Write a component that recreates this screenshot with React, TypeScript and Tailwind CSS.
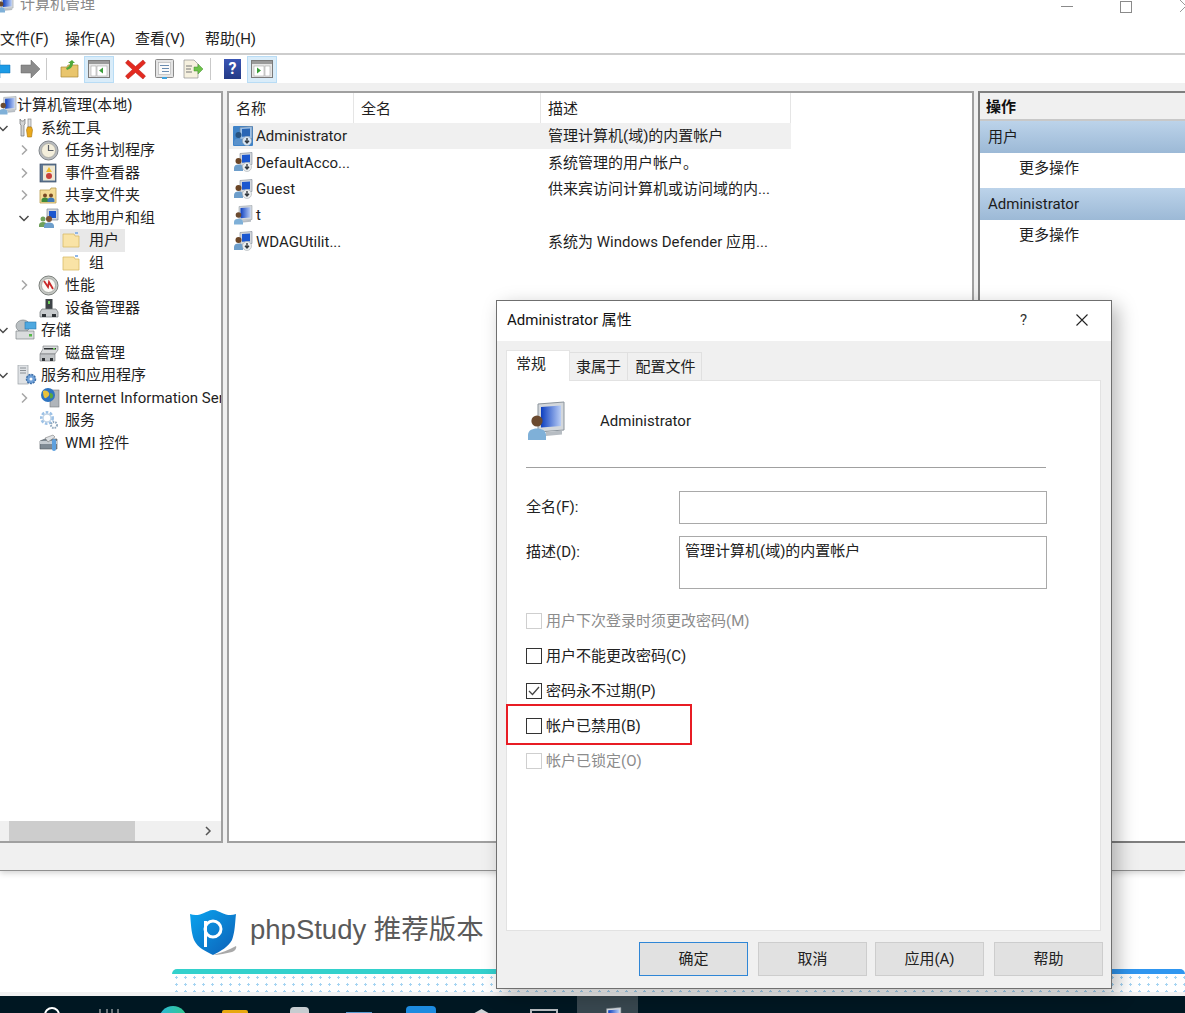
import React from "react";

const F = "[font-family:'Roboto','Noto_Sans_CJK_SC',sans-serif]";

function Monitor({ s = 18 }: { s?: number }) {
  return (
    <svg width={s} height={s} viewBox="0 0 20 20" className="shrink-0">
      <defs>
        <linearGradient id="scr" x1="0" y1="0" x2="1" y2="0">
          <stop offset="0" stopColor="#0d3fc0" />
          <stop offset="1" stopColor="#b9cdf5" />
        </linearGradient>
      </defs>
      <path d="M6 1.500L19 .5v14l-13 1z" fill="#d4d8dc" stroke="#8b949c" strokeWidth=".5" />
      <path d="M7.500 3L17.500 2.200v10.300L7.500 13.300z" fill="url(#scr)" />
      <path d="M10 15.500l8-.7v2l-8 .7z" fill="#b7bdc3" />
      <circle cx="5.500" cy="10" r="2.800" fill="#6b4a2f" />
      <path d="M1 19.500V17c0-2.300 2-3.300 4.500-3.300S10 14.700 10 17v2.500z" fill="#7fb0d8" />
    </svg>
  );
}

function UserDown({ selected }: { selected?: boolean }) {
  return (
    <svg width="20" height="20" viewBox="0 0 20 20" className="shrink-0">
      {selected ? <rect x="0" y="0" width="20" height="20" fill="#3f83c8" rx="1" /> : null}
      <path d="M7 1.500l12-1v12l-12 1z" fill={selected ? "#9cc2ea" : "#d4d8dd"} stroke="#7d8894" strokeWidth=".6" />
      <path d="M9 3l8-.6v7.800l-8 .6z" fill={selected ? "#2a66b5" : "#1b57cf"} />
      <circle cx="5.500" cy="9" r="3" fill={selected ? "#27527f" : "#6b4526"} />
      <path d="M1 19v-3c0-2.500 2-3.500 4.500-3.500s4.500 1 4.500 3.500v3z" fill={selected ? "#5a92cc" : "#6d9ecb"} />
      <circle cx="14" cy="15" r="4.500" fill={selected ? "#d7e6f6" : "#eceeef"} stroke="#9aa2a8" strokeWidth=".5" />
      <path d="M14 12v4.500M12 14.800l2 2.200 2-2.200" stroke="#33393f" strokeWidth="1.400" fill="none" />
    </svg>
  );
}

function Folder() {
  return (
    <svg width="18" height="18" viewBox="0 0 18 18" className="shrink-0">
      <path d="M1 16V3h11l1 2h4v11z" fill="#f9e3a6" stroke="#d9bb68" strokeWidth=".8" />
      <rect x="13" y="1" width="3" height="2" fill="#8fb6e6" />
    </svg>
  );
}

function TreeIcon({ name }: { name: string }) {
  switch (name) {
    case "computer":
      return <Monitor s={19} />;
    case "tools":
      return (
        <svg width="18" height="20" viewBox="0 0 18 20" className="shrink-0">
          <path d="M3 1v5l1 1v11h3V7l1-1V1L6.500 3h-2z" fill="#d3d5d6" stroke="#6e7173" strokeWidth=".7" />
          <rect x="11" y="1" width="3" height="8" fill="#dfe1e3" stroke="#777" strokeWidth=".6" />
          <path d="M10.500 9h4l1 3-1 7h-4l-1-7z" fill="#eaa91c" stroke="#a8740d" strokeWidth=".6" />
        </svg>
      );
    case "clock":
      return (
        <svg width="21" height="21" viewBox="0 0 21 21" className="-ml-[1px] shrink-0">
          <circle cx="10.500" cy="10.500" r="9.500" fill="#b9bcbf" stroke="#80858a" />
          <circle cx="10.500" cy="10.500" r="7" fill="#f4efdc" stroke="#9a9a92" strokeWidth=".6" />
          <path d="M10.500 5v5.500h5" stroke="#5a5f66" strokeWidth="1.200" fill="none" />
        </svg>
      );
    case "log":
      return (
        <svg width="18" height="20" viewBox="0 0 18 20" className="shrink-0">
          <rect x="1" y="1" width="16" height="18" fill="#5f7896" stroke="#3c4e66" strokeWidth=".7" />
          <rect x="4" y="2.500" width="12" height="15" fill="#efe8d2" />
          <path d="M10 4l3 5H7z" fill="#f0bd2c" />
          <circle cx="10" cy="13" r="3" fill="#c8413c" />
        </svg>
      );
    case "share":
      return (
        <svg width="18" height="18" viewBox="0 0 18 18" className="shrink-0">
          <path d="M1 17V4h10l1-2h5v15z" fill="#f4dc96" stroke="#b99c50" strokeWidth=".8" />
          <circle cx="6" cy="9.500" r="2" fill="#7a4a24" />
          <path d="M2.500 16v-2c0-1.500 1.500-2.500 3.500-2.500s3.500 1 3.500 2.500v2z" fill="#3f8a3a" />
          <circle cx="12" cy="9.500" r="2" fill="#7a4a24" />
          <path d="M8.500 16v-2c0-1.500 1.500-2.500 3.500-2.500s3.500 1 3.500 2.500v2z" fill="#3d78b8" />
        </svg>
      );
    case "users":
      return (
        <svg width="20" height="20" viewBox="0 0 20 20" className="shrink-0">
          <path d="M8 1h11v11H8z" fill="#cfd4da" stroke="#7d8894" strokeWidth=".7" />
          <path d="M10 3h7v7h-7z" fill="#1b57cf" />
          <circle cx="4" cy="11" r="2.500" fill="#6fa05a" />
          <path d="M0 19v-2c0-2 2-3 4-3s4 1 4 3v2z" fill="#6fa05a" />
          <circle cx="10" cy="11" r="3" fill="#7a5233" />
          <path d="M5 20v-2c0-2.500 2.500-3.500 5-3.500s5 1 5 3.500v2z" fill="#6d9ecb" />
        </svg>
      );
    case "folder":
      return <Folder />;
    case "perf":
      return (
        <svg width="21" height="21" viewBox="0 0 21 21" className="-ml-[1px] shrink-0">
          <circle cx="10.500" cy="10.500" r="9.500" fill="#c5c8c4" stroke="#7c807c" />
          <circle cx="10.500" cy="10.500" r="7" fill="#fbfbf6" stroke="#8a8c88" strokeWidth=".6" />
          <path d="M6 6l4 6 1-5 4 7" stroke="#c92a2a" strokeWidth="1.800" fill="none" />
        </svg>
      );
    case "device":
      return (
        <svg width="20" height="20" viewBox="0 0 20 20" className="shrink-0">
          <rect x="6.500" y="1" width="7" height="10" fill="#3e4347" />
          <rect x="9" y="3" width="2" height="3" fill="#6fcf5a" />
          <path d="M1 19v-5l2-3h14l2 3v5z" fill="#c9ccce" stroke="#6e7276" strokeWidth=".7" />
          <rect x="3" y="16" width="4" height="3" fill="#2f3336" />
          <rect x="13" y="16" width="4" height="3" fill="#2f3336" />
        </svg>
      );
    case "storage":
      return (
        <svg width="22" height="22" viewBox="0 0 22 22" className="-ml-[2px] shrink-0">
          <ellipse cx="8" cy="7" rx="7" ry="6" fill="#b9bfc2" stroke="#7e8487" strokeWidth=".7" />
          <rect x="10" y="3" width="11" height="7" fill="#4da8e0" stroke="#2a77ad" strokeWidth=".6" />
          <path d="M1 12h18v8H1z" fill="#d9dcdd" stroke="#7e8487" strokeWidth=".7" />
          <rect x="14" y="15" width="3" height="2.500" fill="#55b848" />
        </svg>
      );
    case "disk":
      return (
        <svg width="20" height="18" viewBox="0 0 20 18" className="shrink-0">
          <path d="M4 2h15v4l-3 4H1l3-5z" fill="#d9dbdc" stroke="#6e7276" strokeWidth=".6" />
          <rect x="5" y="4" width="12" height="1.500" fill="#2c3033" />
          <rect x="14" y="4" width="2" height="1.500" fill="#6fcf5a" />
          <path d="M1 10h15v7H1z" fill="#c1c4c6" stroke="#6e7276" strokeWidth=".6" />
          <rect x="3" y="14" width="3" height="3" fill="#2f3336" />
          <rect x="11" y="14" width="3" height="3" fill="#2f3336" />
        </svg>
      );
    case "services":
      return (
        <svg width="20" height="20" viewBox="0 0 20 20" className="shrink-0">
          <rect x="1" y="0" width="10" height="19" fill="#dfe2e5" stroke="#9ba1a6" strokeWidth=".7" />
          <path d="M3 3h6M3 5.500h6M3 8h6" stroke="#8a9096" />
          <circle cx="14" cy="14" r="4.500" fill="#6fa0d8" stroke="#3f70a8" strokeDasharray="2 1" strokeWidth="1.500" />
          <circle cx="14" cy="14" r="1.500" fill="#fff" />
        </svg>
      );
    case "iis":
      return (
        <svg width="21" height="21" viewBox="0 0 21 21" className="shrink-0">
          <rect x="11" y="3" width="9" height="17" fill="#b0b5ba" stroke="#75797d" strokeWidth=".6" />
          <circle cx="9" cy="8" r="7" fill="#2f74c0" />
          <path d="M4 4c3-1 5 0 6 2s-1 4-3 5-3-3-3-7z" fill="#e9c13c" />
          <path d="M11 6c2 0 3 1 3 3s-2 3-3 2z" fill="#5aa83c" />
        </svg>
      );
    case "gear":
      return (
        <svg width="20" height="20" viewBox="0 0 20 20" className="shrink-0">
          <circle cx="8" cy="8" r="5.500" fill="none" stroke="#9cc1e6" strokeWidth="3" strokeDasharray="2.500 1.500" />
          <circle cx="8" cy="8" r="4" fill="none" stroke="#c3d5e6" strokeWidth="1.500" />
          <circle cx="15" cy="15" r="3" fill="none" stroke="#8fa7bd" strokeWidth="2" strokeDasharray="1.500 1" />
        </svg>
      );
    default:
      return (
        <svg width="20" height="18" viewBox="0 0 20 18" className="shrink-0">
          <path d="M1 7l5-2h12v10H1z" fill="#7f8a94" stroke="#4e565d" strokeWidth=".6" />
          <path d="M1 7h17v3H1z" fill="#c5cbd1" />
          <path d="M6 4l8-3 2 2-7 5z" fill="#dfe2e5" stroke="#666" strokeWidth=".5" />
          <rect x="13" y="5" width="4" height="12" rx="2" fill="#5ea0de" />
        </svg>
      );
  }
}

function Chevron({ open }: { open?: boolean }) {
  return open ? (
    <svg width="12" height="12" viewBox="0 0 12 12" className="shrink-0">
      <path d="M1.500 4l4.500 4.500L10.500 4" fill="none" stroke="#4a4a4a" strokeWidth="1.500" />
    </svg>
  ) : (
    <svg width="12" height="12" viewBox="0 0 12 12" className="shrink-0">
      <path d="M4 1.500L8.500 6 4 10.500" fill="none" stroke="#a6a6a6" strokeWidth="1.500" />
    </svg>
  );
}

type TreeItem = { level: number; icon: string; text: string; c?: "open" | "closed"; sel?: boolean };
const TREE: TreeItem[] = [
  { level: 0, icon: "computer", text: "计算机管理(本地)" },
  { level: 1, icon: "tools", text: "系统工具", c: "open" },
  { level: 2, icon: "clock", text: "任务计划程序", c: "closed" },
  { level: 2, icon: "log", text: "事件查看器", c: "closed" },
  { level: 2, icon: "share", text: "共享文件夹", c: "closed" },
  { level: 2, icon: "users", text: "本地用户和组", c: "open" },
  { level: 3, icon: "folder", text: "用户", sel: true },
  { level: 3, icon: "folder", text: "组" },
  { level: 2, icon: "perf", text: "性能", c: "closed" },
  { level: 2, icon: "device", text: "设备管理器" },
  { level: 1, icon: "storage", text: "存储", c: "open" },
  { level: 2, icon: "disk", text: "磁盘管理" },
  { level: 1, icon: "services", text: "服务和应用程序", c: "open" },
  { level: 2, icon: "iis", text: "Internet Information Services (IIS)管理器", c: "closed" },
  { level: 2, icon: "gear", text: "服务" },
  { level: 2, icon: "wmi", text: "WMI 控件" },
];

const CHEV = ["w-0 -ml-[2px]", "w-[20px] -ml-[3px]", "w-[39px] pl-[18px]", "w-[62px]"];
const ICONBOX = ["w-[19px]", "w-[24px]", "w-[26px]", "w-[27px]"];

function TreeRow({ item }: { item: TreeItem }) {
  return (
    <div className="flex h-[22.5px] items-center whitespace-nowrap">
      <div className={`${CHEV[item.level]} flex shrink-0 justify-start`}>
        {item.c ? <Chevron open={item.c === "open"} /> : null}
      </div>
      <div className={`flex h-full items-center ${item.sel ? "-ml-[2px] bg-[#e8e8e8] pl-[2px] pr-[6px]" : ""}`}>
        <div className={`${ICONBOX[item.level]} flex shrink-0`}>
          <TreeIcon name={item.icon} />
        </div>
        <span>{item.text}</span>
      </div>
    </div>
  );
}

function ToolBtn({ active, children }: { active?: boolean; children: React.ReactNode }) {
  return (
    <div
      className={`flex h-[27px] shrink-0 items-center justify-center ${
        active ? "w-[30px] border border-[#b8dcf5] bg-[#d9ecf9]" : "w-[29px]"
      }`}
    >
      {children}
    </div>
  );
}

function Toolbar() {
  return (
    <div className="flex h-[28px] shrink-0 items-center bg-white">
      <div className="flex w-[11px] shrink-0 items-center justify-end overflow-hidden">
        <svg width="21" height="20" viewBox="0 0 21 20" className="shrink-0">
          <path d="M1 10l9-9v5h10v8H10v5z" fill="#1c9be6" stroke="#0f6db0" strokeWidth=".5" />
        </svg>
      </div>
      <div className="ml-[9px] flex w-[21px] shrink-0">
        <svg width="21" height="20" viewBox="0 0 21 20">
          <path d="M20 10l-9-9v5H1v8h10v5z" fill="#8b8b8b" stroke="#666" strokeWidth=".5" />
        </svg>
      </div>
      <div className="ml-[5px] h-[22px] w-px bg-[#c9c9c9]" />
      <div className="ml-[8px]">
        <ToolBtn>
          <svg width="20" height="20" viewBox="0 0 20 20">
            <path d="M1 18V8h6l1-2h10v12z" fill="#e9c56c" stroke="#a98834" strokeWidth=".7" />
            <path d="M6 9c2-1 4-2 4-5l-2 0 4-3 3 3h-2c0 4-3 6-6 7z" fill="#4fa83a" />
          </svg>
        </ToolBtn>
      </div>
      <ToolBtn active>
        <svg width="22" height="18" viewBox="0 0 22 18">
          <rect x=".5" y=".5" width="21" height="17" fill="#e6e6e6" stroke="#7a7a7a" />
          <rect x="1" y="1" width="20" height="3" fill="#9a9a9a" />
          <rect x="3" y="6" width="5" height="10" fill="#fff" stroke="#9a9a9a" strokeWidth=".5" />
          <rect x="9" y="6" width="10" height="10" fill="#fff" stroke="#9a9a9a" strokeWidth=".5" />
          <path d="M15 7.500v6L11 10.500z" fill="#3a9e3a" />
        </svg>
      </ToolBtn>
      <div className="ml-[7px]">
        <ToolBtn>
          <svg width="21" height="21" viewBox="0 0 21 21">
            <path d="M3 1l7.500 6.500L18 1l2.500 3-7 6.500 7 6.500-2.500 3-7.500-6.500L3 20l-2.500-3 7-6.500-7-6.500z" fill="#e32a20" stroke="#b31b13" strokeWidth=".5" />
          </svg>
        </ToolBtn>
      </div>
      <ToolBtn>
        <svg width="19" height="20" viewBox="0 0 19 20">
          <rect x=".5" y=".5" width="18" height="18" rx="1" fill="#e4e4e4" stroke="#8a8a8a" />
          <rect x="3.500" y="3.500" width="12" height="12" fill="#fafafa" stroke="#b0b0b0" strokeWidth=".6" />
          <path d="M5 6.500h9M7 9.500h7M7 12.500h7" stroke="#6a8cb0" />
          <rect x="7" y="18" width="5" height="2" fill="#3ea3e0" />
        </svg>
      </ToolBtn>
      <ToolBtn>
        <svg width="21" height="20" viewBox="0 0 21 20">
          <path d="M1 1h10l4 4v14H1z" fill="#f6f1df" stroke="#8f8f8f" strokeWidth=".7" />
          <path d="M3 7h6M3 10h5M3 13h6" stroke="#777" />
          <path d="M11 8h4V5l5 5-5 5v-3h-4z" fill="#6cc24a" stroke="#43912a" strokeWidth=".5" />
        </svg>
      </ToolBtn>
      <div className="ml-[2px] h-[22px] w-px bg-[#c9c9c9]" />
      <div className="ml-[7px]">
        <ToolBtn>
          <div className="flex h-[20px] w-[17px] items-center justify-center bg-gradient-to-b from-[#3a55b5] to-[#233a86] text-[16px] font-bold leading-none text-white">
            ?
          </div>
        </ToolBtn>
      </div>
      <ToolBtn active>
        <svg width="22" height="18" viewBox="0 0 22 18">
          <rect x=".5" y=".5" width="21" height="17" fill="#e6e6e6" stroke="#7a7a7a" />
          <rect x="1" y="1" width="20" height="3" fill="#9a9a9a" />
          <rect x="3" y="6" width="10" height="10" fill="#fff" stroke="#9a9a9a" strokeWidth=".5" />
          <rect x="14" y="6" width="5" height="10" fill="#fff" stroke="#9a9a9a" strokeWidth=".5" />
          <path d="M6 7.500v6l4-3z" fill="#3a9e3a" />
        </svg>
      </ToolBtn>
    </div>
  );
}

const USERS = [
  { n: "Administrator", d: "管理计算机(域)的内置帐户", sel: true, plain: false },
  { n: "DefaultAcco...", d: "系统管理的用户帐户。", sel: false, plain: false },
  { n: "Guest", d: "供来宾访问计算机或访问域的内...", sel: false, plain: false },
  { n: "t", d: "", sel: false, plain: true },
  { n: "WDAGUtilit...", d: "系统为 Windows Defender 应用...", sel: false, plain: false },
];

function Check({ checked, disabled }: { checked?: boolean; disabled?: boolean }) {
  return (
    <div
      className={`flex h-[16px] w-[16px] shrink-0 items-center justify-center border ${
        disabled ? "border-[#cfcfcf]" : "border-[#333333]"
      }`}
    >
      {checked ? (
        <svg width="12" height="12" viewBox="0 0 12 12">
          <path d="M1 6l3.500 3.500L11 2" fill="none" stroke="#444" strokeWidth="1.300" />
        </svg>
      ) : null}
    </div>
  );
}

function CheckRow(p: { text: string; checked?: boolean; disabled?: boolean; boxed?: boolean }) {
  return (
    <div className={`relative flex h-[35px] items-center gap-[4px] ${p.disabled ? "text-[#8c8c8c]" : "text-[#222]"}`}>
      <Check checked={p.checked} disabled={p.disabled} />
      <span className="pt-[1px]">{p.text}</span>
      {p.boxed ? (
        <div className="absolute -left-[20px] -top-[4px] h-[41px] w-[186px] border-2 border-[#e81c24]" />
      ) : null}
    </div>
  );
}

function Btn({ text, primary, cls }: { text: string; primary?: boolean; cls?: string }) {
  return (
    <div
      className={`flex h-[34px] w-[109px] shrink-0 items-center justify-center border bg-[#e1e1e1] pt-[1px] ${
        primary ? "border-[#2f86d6]" : "border-[#cdcdcd]"
      } ${cls ?? ""}`}
    >
      {text}
    </div>
  );
}

function Dialog() {
  return (
    <div className="absolute left-[496px] top-[300px] flex h-[689px] w-[616px] flex-col border border-[#6f6f6f] bg-[#f0f0f0] text-[15px] text-[#222] shadow-[6px_6px_18px_rgba(0,0,0,0.28)]">
      <div className="flex h-[40px] shrink-0 items-center bg-white pb-[2px] pl-[10px]">
        <span className="text-[#111]">Administrator 属性</span>
        <span className="ml-auto pr-[1px] text-[#333]">?</span>
        <svg width="14" height="14" viewBox="0 0 14 14" className="ml-[47px] mr-[22px]">
          <path d="M1.500 1.500l11 11M12.500 1.500l-11 11" stroke="#222" strokeWidth="1.100" />
        </svg>
      </div>
      <div className="flex h-[39px] shrink-0 items-end pl-[9px]">
        <div className="z-10 -mb-px flex h-[31px] w-[64px] items-start justify-center border border-b-0 border-[#e4e4e4] bg-white pr-[14px] pt-[2px]">
          常规
        </div>
        <div className="flex h-[28px] w-[58px] items-center justify-center border border-b-0 border-l-0 border-[#e0e0e0] pt-[1px]">
          隶属于
        </div>
        <div className="flex h-[28px] w-[74px] items-center justify-center border border-b-0 border-l-0 border-[#e0e0e0] pl-[2px] pt-[1px]">
          配置文件
        </div>
      </div>
      <div className="ml-[9px] flex h-[551px] w-[595px] shrink-0 flex-col border border-[#e2e2e2] bg-white px-[19px] pt-[19px]">
        <div className="flex h-[41px] items-center">
          <div className="flex w-[74px] shrink-0">
            <Monitor s={40} />
          </div>
          <span className="pt-[2px]">Administrator</span>
        </div>
        <div className="mt-[26px] h-[1px] w-[520px] bg-[#a0a0a0]" />
        <div className="mt-[23px] flex h-[33px] items-center">
          <span className="w-[153px] shrink-0">全名(F):</span>
          <div className="h-[33px] w-[368px] border border-[#a9a9a9] bg-white" />
        </div>
        <div className="mt-[12px] flex h-[53px] items-start">
          <span className="w-[153px] shrink-0 pt-[5px]">描述(D):</span>
          <div className="h-[53px] w-[368px] border border-[#a9a9a9] bg-white px-[5px] pt-[3px]">
            管理计算机(域)的内置帐户
          </div>
        </div>
        <div className="mt-[14px] flex flex-col">
          <CheckRow text="用户下次登录时须更改密码(M)" disabled />
          <CheckRow text="用户不能更改密码(C)" />
          <CheckRow text="密码永不过期(P)" checked />
          <CheckRow text="帐户已禁用(B)" boxed />
          <CheckRow text="帐户已锁定(O)" disabled />
        </div>
      </div>
      <div className="ml-[142px] mt-[11px] flex text-[#222]">
        <Btn text="确定" primary />
        <Btn text="取消" cls="ml-[10px]" />
        <Btn text="应用(A)" cls="ml-[8px]" />
        <Btn text="帮助" cls="ml-[10px]" />
      </div>
    </div>
  );
}

function ActionGroup({ title }: { title: string }) {
  return (
    <div className="h-[67px]">
      <div className="flex h-[32px] items-center bg-gradient-to-b from-[#bcd3ea] to-[#9cb9d6] pl-[8px] pt-[1px] text-[#1c1c1c]">{title}</div>
      <div className="flex h-[30px] items-center pl-[39px] text-[#222]">更多操作</div>
    </div>
  );
}

export default function App() {
  return (
    <div className={`relative h-[1013px] w-[1185px] overflow-hidden bg-white ${F} text-[15px] text-[#1f1f1f]`}>
      <div className="flex h-[871px] flex-col border-b border-[#8f8f8f] bg-[#f0f0f0] shadow-[0_2px_6px_rgba(0,0,0,0.18)]">
        {/* title */}
        <div className="flex h-[25px] shrink-0 items-start bg-white">
          <div className="-mt-[7px] flex items-center">
            <div className="-ml-[4px]"><Monitor s={18} /></div>
            <span className="ml-[6px] text-[15px] text-[#8a8a8a]">计算机管理</span>
          </div>
          <div className="ml-auto -mr-[2px] flex items-start">
            <div className="mt-[6px] h-px w-[12px] bg-[#8a8a8a]" />
            <div className="ml-[47px] mt-[1px] h-[12px] w-[12px] border border-[#8a8a8a]" />
            <svg width="8" height="14" viewBox="0 0 8 14" className="ml-[47px] -mt-[1px]">
              <path d="M1 1l6 6-6 6" fill="none" stroke="#9a9a9a" />
            </svg>
          </div>
        </div>
        {/* menu */}
        <div className="flex h-[30px] shrink-0 items-center border-b-2 border-[#cdcdcd] bg-white text-[#222]">
          <span className="w-[65px] shrink-0">文件(F)</span>
          <span className="w-[70px] shrink-0">操作(A)</span>
          <span className="w-[70px] shrink-0">查看(V)</span>
          <span>帮助(H)</span>
        </div>
        <Toolbar />
        {/* panes */}
        <div className="flex min-h-0 flex-1 flex-col bg-[#f0f0f0] pt-[8px]">
          <div className="flex h-[752px] shrink-0 gap-[4px]">
            {/* tree */}
            <div className="flex w-[223px] shrink-0 flex-col border-[2px] border-l-0 border-[#a0a0a0] bg-white">
              <div className="min-h-0 flex-1 overflow-hidden pt-[1px]">
                {TREE.map((t) => (
                  <TreeRow key={t.text + t.level} item={t} />
                ))}
              </div>
              <div className="flex h-[20px] shrink-0 items-center bg-[#f0f0f0]">
                <div className="ml-[9px] h-[20px] w-[126px] bg-[#cdcdcd]" />
                <svg width="8" height="10" viewBox="0 0 8 10" className="ml-auto mr-[9px]">
                  <path d="M2 1l4 4-4 4" fill="none" stroke="#555" strokeWidth="1.500" />
                </svg>
              </div>
            </div>
            {/* list */}
            <div className="w-[747px] shrink-0 border-[2px] border-[#a0a0a0] bg-white">
              <div className="flex h-[30px] w-[563px] items-center">
                <span className="flex h-full w-[125px] items-center border-r border-[#e5e5e5] pl-[7px] pt-[2px]">名称</span>
                <span className="flex h-full w-[187px] items-center border-r border-[#e5e5e5] pl-[7px] pt-[2px]">全名</span>
                <span className="flex h-full w-[250px] items-center border-r border-[#e5e5e5] pl-[7px] pt-[2px]">描述</span>
              </div>
              {USERS.map((u) => (
                <div
                  key={u.n}
                  className={`flex h-[26.3px] w-[562px] items-center whitespace-nowrap ${u.sel ? "bg-[#f0f0f0]" : ""}`}
                >
                  <div className="flex w-[313px] shrink-0 items-center pl-[4px]">
                    {u.plain ? <Monitor s={20} /> : <UserDown selected={u.sel} />}
                    <span className="ml-[3px] pt-[1px]">{u.n}</span>
                  </div>
                  <div className="flex flex-1 items-center self-stretch pl-[6px] pt-[1px]">{u.d}</div>
                </div>
              ))}
            </div>
            {/* actions */}
            <div className="min-w-0 flex-1 border-[2px] border-r-0 border-[#7f7f7f] bg-white">
              <div className="flex h-[28px] items-center border-b-2 border-[#c8c8c8] bg-[#f0f0f0] pl-[6px] pt-[3px] font-bold text-[#111]">操作</div>
              <ActionGroup title="用户" />
              <ActionGroup title="Administrator" />
            </div>
          </div>
        </div>
      </div>
      {/* background page */}
      <div className="h-[98px] pl-[189px] pt-[39px]">
        <div className="flex h-[46px] items-center">
          <svg width="48" height="46" viewBox="0 0 48 46" className="shrink-0">
            <defs>
              <linearGradient id="sh" x1="0" y1="0" x2="1" y2="1">
                <stop offset="0" stopColor="#0aa4ef" />
                <stop offset="1" stopColor="#0d5fb6" />
              </linearGradient>
            </defs>
            <path d="M1 4c5 2 10 1 14-1 3-1 5-3 9-3s6 2 9 3c4 2 9 3 14 1-1 9-1 18-4 26-4 7-11 11-19 15C16 41 9 38 5 30 2 22 2 13 1 4z" fill="url(#sh)" />
            <path d="M24 45c8-2 16-5 23-9 1 2-1 5-4 6-6 1-13 3-19 3z" fill="#a9a9a9" />
            <circle cx="24" cy="19" r="8" fill="none" stroke="#fff" strokeWidth="3" />
            <path d="M16.500 11v26" stroke="#fff" strokeWidth="3" />
          </svg>
          <span className="-mt-[6px] ml-[13px] whitespace-nowrap text-[27.5px] leading-none text-[#5a5a5a] [font-family:'Liberation_Sans','Noto_Sans_CJK_SC',sans-serif]">
            phpStudy 推荐版本
          </span>
        </div>
      </div>
      <div className="ml-[172px] flex h-[23px] flex-col overflow-hidden rounded-t-[5px]">
        <div className="h-[5px] shrink-0 bg-gradient-to-r from-[#33d1cc] from-[30%] to-[#2f96f0] to-[85%]" />
        <div className="flex-1 bg-white bg-[radial-gradient(circle,#a5d4f2_1px,transparent_1.3px)] bg-[length:9px_7px]" />
      </div>
      <div className="h-[4px] bg-[#f2f2f2]" />
      <div className="flex h-[17px] items-start overflow-hidden bg-[#001722]">
        <svg width="18" height="18" viewBox="0 0 18 18" className="ml-[43px] mt-[10px] shrink-0">
          <circle cx="9" cy="9" r="7" fill="none" stroke="#fff" strokeWidth="2" />
        </svg>
        <svg width="20" height="10" viewBox="0 0 20 10" className="ml-[38px] mt-[12px] shrink-0">
          <path d="M1 1v9M8 1v9M13 1v9M19 1v9" stroke="#d5d5d5" />
        </svg>
        <div className="ml-[40px] mt-[10px] h-[28px] w-[28px] shrink-0 rounded-full bg-gradient-to-r from-[#2fb6d6] to-[#35c98c]" />
        <div className="ml-[35px] mt-[14px] h-[20px] w-[26px] shrink-0 rounded-t-[2px] bg-[#e8a80f]" />
        <div className="ml-[42px] mt-[11px] h-[20px] w-[19px] shrink-0 rounded-t-[4px] bg-[#c7ccd0]" />
        <div className="ml-[37px] mt-[16px] h-[20px] w-[26px] shrink-0 bg-[#5a9bd0]" />
        <div className="ml-[34px] mt-[10px] flex h-[30px] w-[30px] shrink-0 justify-center rounded-[4px] bg-[#1d8be0]" />
        <div className="ml-[35px] mt-[13px] h-[20px] w-[21px] shrink-0 bg-[#cfd3d6] [clip-path:polygon(50%_0,100%_30%,100%_100%,0_100%,0_30%)]" />
        <div className="ml-[38px] mt-[13px] h-[20px] w-[28px] shrink-0 border-2 border-[#b8bcc0]" />
        <div className="ml-[19px] flex h-full w-[61px] shrink-0 bg-[#38474f] pl-[23px] pt-[11px]">
          <Monitor s={22} />
        </div>
      </div>
      <Dialog />
    </div>
  );
}
